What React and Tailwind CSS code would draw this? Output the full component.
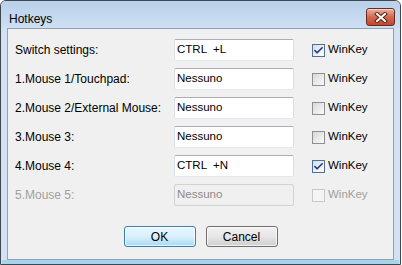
import { Check } from "lucide-react";

const font = { fontFamily: '"Liberation Sans", Arial, sans-serif' };

const rows = [
  { label: "Switch settings:", value: "CTRL  +L", checked: true },
  { label: "1.Mouse 1/Touchpad:", value: "Nessuno", checked: false },
  { label: "2.Mouse 2/External Mouse:", value: "Nessuno", checked: false },
  { label: "3.Mouse 3:", value: "Nessuno", checked: false },
  { label: "4.Mouse 4:", value: "CTRL  +N", checked: true },
  { label: "5.Mouse 5:", value: "Nessuno", checked: false, disabled: true },
];

function CloseButton() {
  return (
    <div className="w-[29px] h-[18px] rounded-[3px] border border-[#6b2a1e] bg-gradient-to-b from-[#eab1a2] via-[#d26a50] to-[#c2452b] flex items-center justify-center shadow-[inset_0_1px_0_rgba(255,255,255,0.5)]">
      <svg width="14" height="11" viewBox="0 0 14 11">
        <path d="M3 2 L11 9 M11 2 L3 9" stroke="#5a2318" strokeWidth="4" strokeLinecap="square" />
        <path d="M3 2 L11 9 M11 2 L3 9" stroke="#ffffff" strokeWidth="2" strokeLinecap="square" />
      </svg>
    </div>
  );
}

function CheckBox({ checked, disabled }) {
  const box = disabled
    ? "border-[#c8c8c8] bg-[#f4f4f4]"
    : checked
    ? "border-[#4f6f96] bg-gradient-to-br from-[#d6dde6] to-[#ffffff]"
    : "border-[#8e8f8f] bg-gradient-to-br from-[#d8d8d8] to-[#fbfbfb]";
  return (
    <div className={`w-[13px] h-[13px] border ${box} flex items-center justify-center`}>
      {checked && <Check size={11} strokeWidth={3.5} className="text-[#21348a]" />}
    </div>
  );
}

function HotkeyRow({ row }) {
  return (
    <div className="flex items-center h-[22px]">
      <span className={`w-[159px] ${row.disabled ? "text-[#a0a0a0]" : "text-black"}`}>{row.label}</span>
      <div
        className={`w-[120px] h-[22px] border rounded-[2px] flex items-center px-[2px] text-[11.5px] ${
          row.disabled
            ? "border-[#d2d2d2] bg-[#f0f0f0] text-[#8a8a8a]"
            : "border-[#abadb3] border-b-[#e3e9ef] border-x-[#dbdfe6] bg-white text-black"
        }`}
      >
        <span className="whitespace-pre">{row.value}</span>
      </div>
      <div className="ml-[18px] flex items-center gap-[3px] text-[11.5px]">
        <CheckBox checked={row.checked} disabled={row.disabled} />
        <span className={row.disabled ? "text-[#a0a0a0]" : "text-black"}>WinKey</span>
      </div>
    </div>
  );
}

export default function App() {
  return (
    <div className="w-[402px] h-[265px] bg-white text-[12px]" style={font}>
      <div className="w-[401px] h-[265px] border border-[#3e4650] rounded-t-[6px] bg-[#d3e2f2] flex flex-col">
        {/* TITLE BAR */}
        <div className="h-[27px] rounded-t-[5px] bg-gradient-to-b from-[#b9d1ea] to-[#cddff2] flex justify-between pl-[8px] pr-[5px]">
          <span className="pt-[9px] text-black">Hotkeys</span>
          <div className="pt-[7px]">
            <CloseButton />
          </div>
        </div>

        {/* CLIENT */}
        <div className="flex-1 flex flex-col px-[6px]">
          <div className="flex-1 bg-[#f0f0f0] border border-[#8fa2b8] pl-[7px] pt-[10px] flex flex-col">
            <div className="flex flex-col gap-[7px]">
              {rows.map((row) => (
                <HotkeyRow key={row.label} row={row} />
              ))}
            </div>
            <div className="flex justify-center gap-[10px] mt-[20px] pr-[7px]">
              <button className="w-[72px] h-[21px] rounded-[3px] border border-[#3c7fb1] bg-gradient-to-b from-[#eaf6fd] via-[#d9f0fc] to-[#a7d9f5] text-black shadow-[inset_0_0_0_1px_rgba(255,255,255,0.7)]">
                OK
              </button>
              <button className="w-[72px] h-[21px] rounded-[3px] border border-[#707070] bg-gradient-to-b from-[#f2f2f2] via-[#e6e6e6] to-[#cfcfcf] text-black shadow-[inset_0_0_0_1px_rgba(255,255,255,0.7)]">
                Cancel
              </button>
            </div>
          </div>
        </div>
        {/* BOTTOM EDGE */}
        <div className="h-[4px] mx-[1px] bg-[#a6d4ea]" />
      </div>
    </div>
  );
}
